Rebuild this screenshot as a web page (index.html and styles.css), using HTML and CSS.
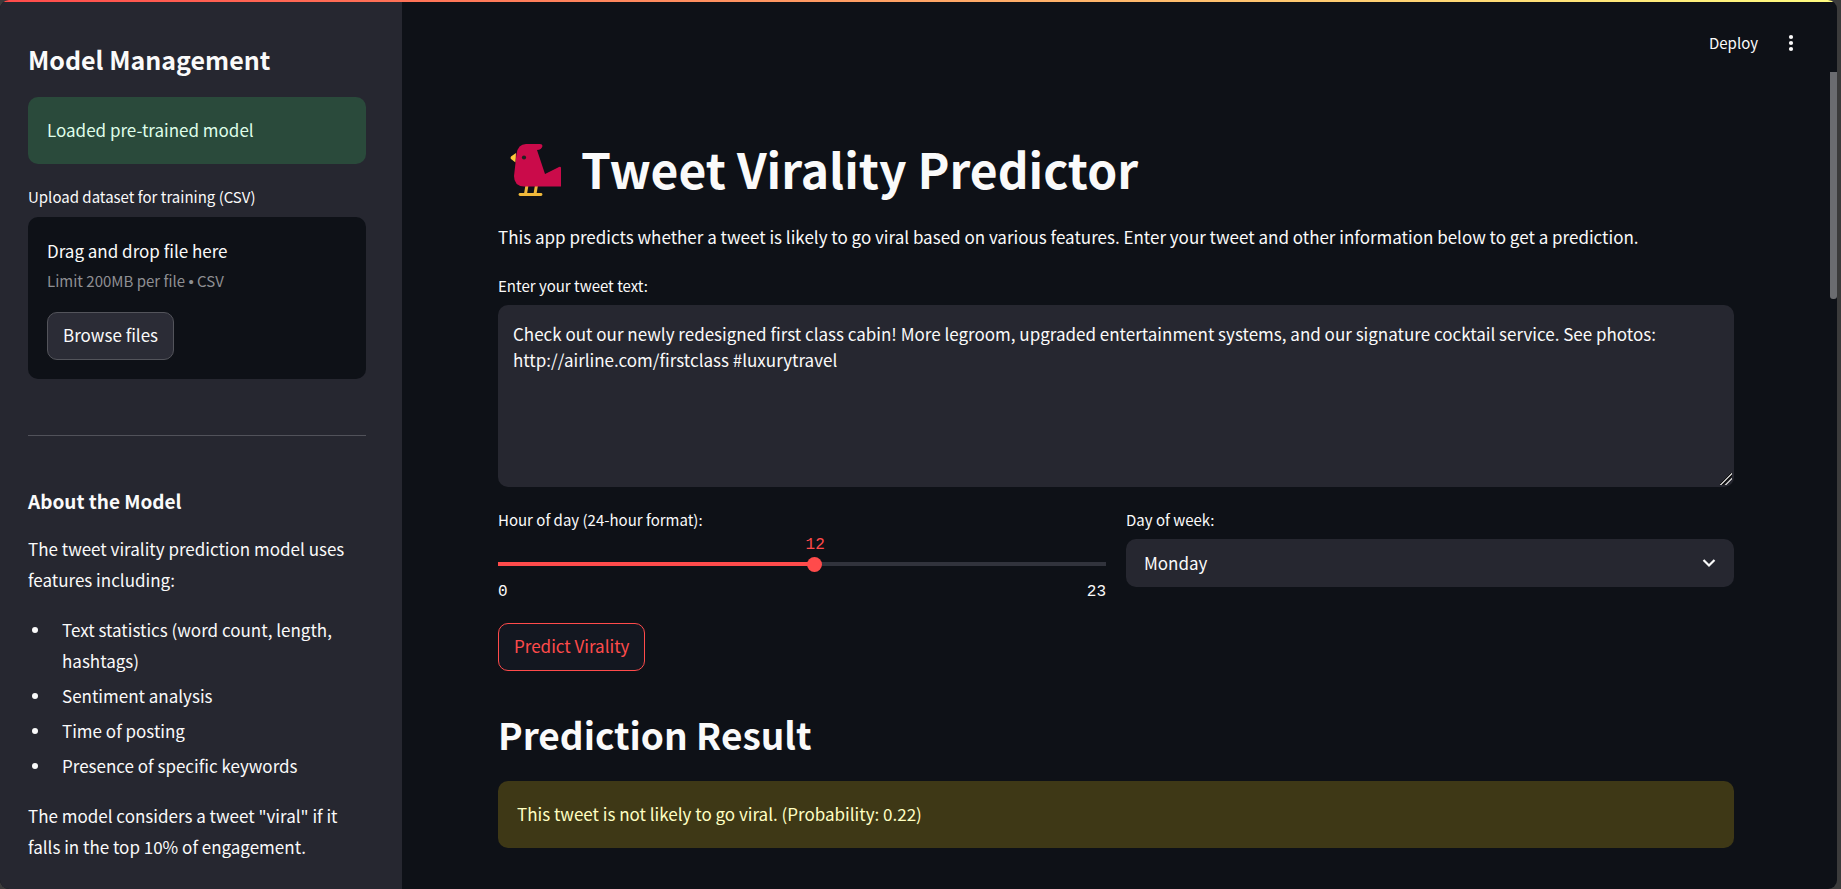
FILE: index.html
```html
<!DOCTYPE html>
<html lang="en">
<head>
<meta charset="utf-8">
<title>Tweet Virality Predictor</title>
<link rel="stylesheet" href="styles.css">
</head>
<body>
<div class="window">
  <div class="decoration"></div>
  <aside class="sidebar">
    <h2 class="sidebar-title">Model Management</h2>
    <div class="alert alert-success">Loaded pre-trained model</div>
    <section class="upload">
      <label class="label" for="browse">Upload dataset for training (CSV)</label>
      <div class="dropzone">
        <div>Drag and drop file here</div>
        <div class="limit">Limit 200MB per file <span class="dot">•</span> CSV</div>
        <button class="button" id="browse" type="button">Browse files</button>
      </div>
    </section>
    <hr class="divider">
    <h3 class="about-title">About the Model</h3>
    <p class="text">The tweet virality prediction model uses features including:</p>
    <ul class="features">
      <li>Text statistics (word count, length, hashtags)</li>
      <li>Sentiment analysis</li>
      <li>Time of posting</li>
      <li>Presence of specific keywords</li>
    </ul>
    <p class="text">The model considers a tweet "viral" if it falls in the top 10% of engagement.</p>
  </aside>
  <div class="page">
    <header class="toolbar">
      <button class="deploy" type="button">Deploy</button>
      <button class="menu" type="button" aria-label="Menu">
        <svg width="24" height="24" viewBox="0 0 24 24" fill="currentColor"><circle cx="12" cy="6" r="2.1"/><circle cx="12" cy="12" r="2.1"/><circle cx="12" cy="18" r="2.1"/></svg>
      </button>
    </header>
    <main class="content">
      <h1 class="title">
        <svg class="bird" width="53" height="56" viewBox="0 0 53 56" aria-hidden="true">
          <path d="M6 11 L1 14.500 Q0 16 1 17 L5.500 20.500 Z" fill="#ffc83d"/>
          <path d="M17 43 L15.500 52 M26.500 43 L25 52" stroke="#ecb53a" stroke-width="3" fill="none"/>
          <path d="M10 52.500 H31" stroke="#f0ba3b" stroke-width="2.800" stroke-linecap="round"/>
          <path d="M16 2 H30 Q32.500 2 32.500 4 Q31.500 7.800 27 8 L35 32 L49 25 Q51 24.300 51 26 V44.500 H14 Q4 44 4 34 L6.500 12 Q8 2 16 2 Z" fill="#ca0b4a"/>
          <circle cx="14" cy="15.500" r="2.100" fill="#212121"/>
        </svg>
        <span>Tweet Virality Predictor</span>
      </h1>
      <p class="text">This app predicts whether a tweet is likely to go viral based on various features. Enter your tweet and other information below to get a prediction.</p>
      <div class="field tweet-field">
        <label class="label" for="tweet">Enter your tweet text:</label>
        <textarea class="tweet" id="tweet">Check out our newly redesigned first class cabin! More legroom, upgraded entertainment systems, and our signature cocktail service. See photos: http://airline.com/firstclass #luxurytravel</textarea>
      </div>
      <div class="columns">
        <div class="field">
          <label class="label" for="hour">Hour of day (24-hour format):</label>
          <div class="slider">
            <output class="slider-value" for="hour" style="left: 52.17%">12</output>
            <input class="range" id="hour" type="range" min="0" max="23" value="12">
            <div class="bounds"><span>0</span><span>23</span></div>
          </div>
        </div>
        <div class="field">
          <label class="label" for="day">Day of week:</label>
          <div class="select-box">
            <select class="select" id="day"><option>Monday</option><option>Tuesday</option><option>Wednesday</option><option>Thursday</option><option>Friday</option><option>Saturday</option><option>Sunday</option></select>
            <svg class="chevron" width="16" height="16" viewBox="0 0 16 16" fill="none" stroke="currentColor" stroke-width="2.200"><path d="M2.500 5 L8 10.500 L13.500 5"/></svg>
          </div>
        </div>
      </div>
      <button class="button predict" type="button">Predict Virality</button>
      <h2 class="result-title">Prediction Result</h2>
      <div class="alert alert-warning">This tweet is not likely to go viral. (Probability: 0.22)</div>
    </main>
    <div class="scroll-thumb"></div>
  </div>
</div>
</body>
</html>
```
FILE: styles.css
```css
* { box-sizing: border-box; }

body {
  margin: 0;
  background: #3b3b3b;
  color: #fafafa;
  color-scheme: dark;
  font: 17px/30px "Noto Sans CJK SC", "Noto Sans", sans-serif;
}

h1, h2, h3, p, ul { margin: 0; }
button, textarea, select { font: inherit; color: inherit; }

.window {
  position: relative;
  display: flex;
  min-height: 100vh;
  margin-right: 4px;
  border-radius: 9px;
  overflow: hidden;
  background: #0e1117;
}

.decoration {
  position: absolute;
  inset: 0 0 auto;
  height: 2px;
  background: linear-gradient(90deg, #ff4b4b, #fffd80);
}

.sidebar {
  flex: none;
  width: 402px;
  padding: 41px 36px 8px 28px;
  background: #262730;
}

.sidebar-title { font-size: 25px; line-height: 36px; margin-bottom: 20px; }

.alert { padding: 17px 19px 19px; border-radius: 10px; line-height: 31px; }
.alert-success { background: #2a4a3b; color: #dffde9; }
.alert-warning { background: #3e3816; color: #ffffc2; }

.label { display: block; font-size: 15px; line-height: 28px; }

.upload { margin-top: 19px; }
.dropzone {
  margin-top: 6px;
  padding: 19px;
  border-radius: 10px;
  background: #0e1117;
}
.limit { margin-bottom: 16px; font-size: 15px; color: #8e8f93; }
.dot { font-family: "Liberation Sans", sans-serif; line-height: 0; }

.button {
  display: block;
  height: 48px;
  padding: 0 15px 2px;
  border: 1px solid #53545b;
  border-radius: 10px;
  background: #2b2c36;
}

.divider { margin: 56px 0 51px; border: 0; border-top: 1px solid #51525a; }

.about-title { font-size: 19px; line-height: 28px; margin-bottom: 18px; }
.text, .features { line-height: 31px; }
.features { margin: 19px 0; padding: 0; list-style: none; }
.features li { position: relative; padding-left: 34px; }
.features li::before {
  content: "";
  position: absolute;
  left: 4px;
  top: 13px;
  width: 6px;
  height: 6px;
  border-radius: 50%;
  background: #fafafa;
}
.features li + li { margin-top: 4px; }

.page { position: relative; flex: 1; min-width: 0; padding-right: 7px; }

.toolbar {
  display: flex;
  justify-content: flex-end;
  align-items: center;
  gap: 21px;
  height: 72px;
  padding: 14px 27px 0 0;
}
.deploy, .menu { padding: 0; border: 0; background: none; font-size: 15px; }
.menu { display: flex; }

.content { padding: 62px 96px 32px; }

.title {
  display: flex;
  align-items: flex-start;
  gap: 18px;
  padding: 8px 0 0 12px;
  font-size: 48px;
  line-height: 60px;
  margin-bottom: 23px;
}
.title span { margin-top: -4px; }

.tweet-field { margin-top: 20px; }
.tweet {
  display: block;
  width: 100%;
  height: 182px;
  margin-top: 5px;
  padding: 16px 15px;
  border: 0;
  border-radius: 10px;
  background: #262730;
  line-height: 26px;
  resize: vertical;
}
.tweet::-webkit-resizer {
  background: linear-gradient(135deg, transparent 43%, #111 43% 49%, #bbb 49% 57%, #111 57% 63%, transparent 63% 68%, #bbb 68% 76%, transparent 76%) 1px 1px / 12px 12px no-repeat;
}

.columns {
  display: grid;
  grid-template-columns: 1fr 1fr;
  gap: 20px;
  margin-top: 19px;
}

.slider {
  position: relative;
  padding-top: 22px;
  color: #fafafa;
  font: 16px/22px "Liberation Mono", monospace;
}
.slider-value {
  position: absolute;
  top: 0;
  transform: translateX(-50%);
  color: #ff4b4b;
}
.range {
  appearance: none;
  display: block;
  width: 100%;
  height: 16px;
  margin: 0 0 9px;
  border-radius: 2px;
  background: linear-gradient(90deg, #ff4b4b 52%, #31333c 52%) center / 100% 4px no-repeat;
}
.range::-webkit-slider-thumb {
  appearance: none;
  width: 15px;
  height: 15px;
  border-radius: 50%;
  background: #ff4b4b;
}
.bounds { display: flex; justify-content: space-between; }

.select-box { position: relative; margin-top: 5px; }
.select {
  appearance: none;
  display: block;
  width: 100%;
  height: 48px;
  padding: 0 48px 0 18px;
  border: 0;
  border-radius: 10px;
  background: #262730;
}
.chevron { position: absolute; right: 17px; top: 16px; pointer-events: none; }

.predict {
  margin-top: 20px;
  border-color: #ff4b4b;
  background: #131720;
  color: #ff4b4b;
}

.result-title { margin: 34px 0 18px; font-size: 37px; line-height: 58px; }

.scroll-thumb {
  position: absolute;
  top: 72px;
  right: 0;
  width: 7px;
  height: 227px;
  border-radius: 0 0 3px 3px;
  background: #6b6c70;
}
```
